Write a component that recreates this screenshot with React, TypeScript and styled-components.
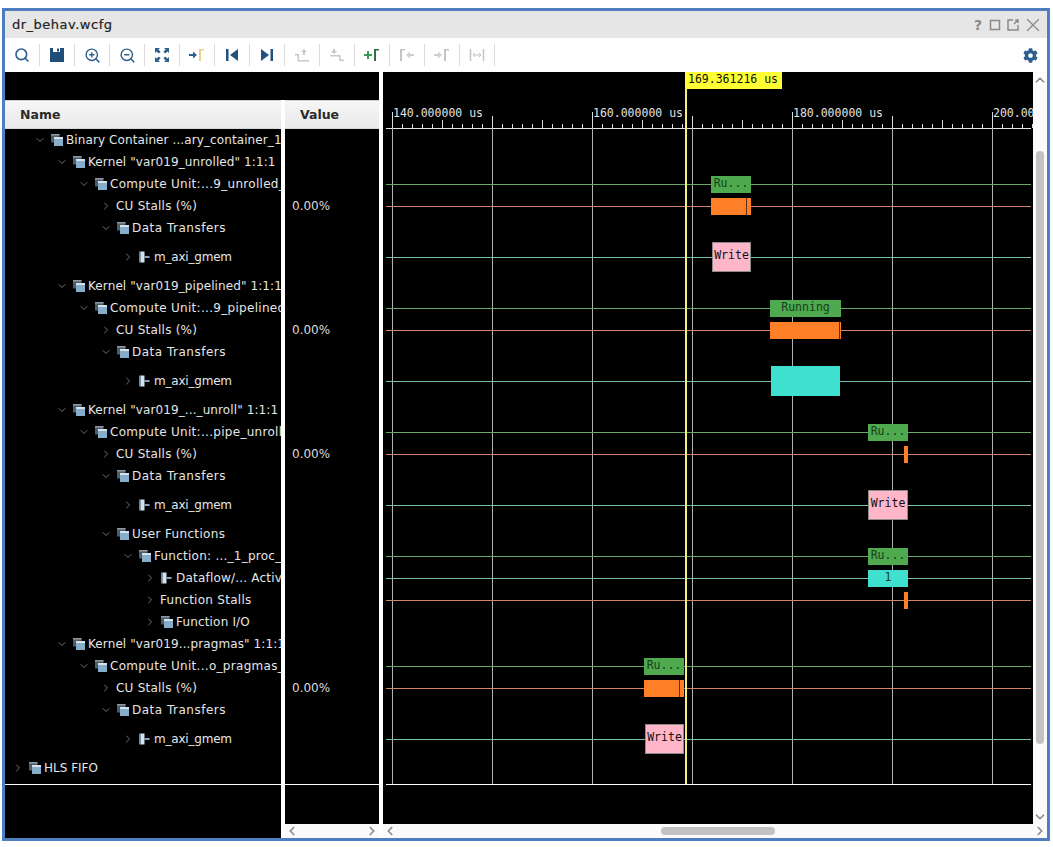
import React from 'react'
import styled, { createGlobalStyle } from 'styled-components'
import {
  ChevronDown,
  ChevronLeft,
  ChevronRight,
  ChevronUp,
  Search,
  X,
  ZoomIn,
  ZoomOut,
} from 'lucide-react'
import { FaCog } from 'react-icons/fa'

const GlobalStyle = createGlobalStyle`
  html, body {
    margin: 0;
    padding: 0;
    background: #fff;
  }
`

const Window = styled.div`
  box-sizing: border-box;
  width: 1048px;
  height: 833px;
  margin: 8px 0 0 2px;
  border: 3px solid #4f7dbd;
  display: flex;
  flex-direction: column;
  background: #fff;
  font-family: 'DejaVu Sans', sans-serif;
  overflow: hidden;
`

const TitleBar = styled.div`
  height: 27px;
  flex: none;
  background: #e6e6e6;
  display: flex;
  align-items: center;
  padding: 0 3px 0 7px;
`

const Title = styled.div`
  font-size: 13px;
  letter-spacing: 0.5px;
  color: #222;
  -webkit-text-stroke: 0.2px #222;
`

const WindowActions = styled.div`
  margin-left: auto;
  display: flex;
  align-items: center;
  gap: 4px;
  color: #8a8a8a;
`

const HelpMark = styled.span`
  font-size: 14px;
  font-weight: bold;
  width: 12px;
  text-align: center;
`

const CloseMark = styled.span`
  display: flex;
  margin-left: -2px;
`

const Toolbar = styled.div`
  height: 34px;
  flex: none;
  display: flex;
  align-items: center;
  background: #fff;
  padding-right: 9px;
`

const ToolButton = styled.div`
  box-sizing: border-box;
  width: 35px;
  height: 22px;
  border-right: 1px solid #dcdcdc;
  display: flex;
  align-items: center;
  justify-content: center;
`

const GearButton = styled.div`
  margin-left: auto;
  display: flex;
  color: #2f5f8c;
`

const Main = styled.div`
  flex: 1;
  min-height: 0;
  display: flex;
  background: #fff;
`

const TablePanel = styled.div`
  width: 374px;
  flex: none;
  display: flex;
  flex-direction: column;
  margin-right: 4px;
`

const TopBand = styled.div`
  height: 28px;
  flex: none;
  background: #000;
`

const Columns = styled.div`
  flex: 1;
  min-height: 0;
  display: flex;
  gap: 4px;
`

const NameColumn = styled.div`
  width: 276px;
  flex: none;
  display: flex;
  flex-direction: column;
  background: #000;
  overflow: hidden;
`

const ValueColumn = styled.div`
  flex: 1;
  display: flex;
  flex-direction: column;
  background: #000;
`

const HeaderCell = styled.div<{ $indent: number }>`
  box-sizing: border-box;
  height: 29px;
  flex: none;
  display: flex;
  align-items: center;
  padding-left: ${p => p.$indent}px;
  background: linear-gradient(#f6f6f6, #e9e9e9);
  border-top: 1px solid #cfcfcf;
  border-bottom: 1px solid #d8d8d8;
  font-size: 12.5px;
  font-weight: bold;
  color: #2a2a2a;
`

const RowList = styled.div`
  display: flex;
  flex-direction: column;
  height: 655px;
  flex: none;
  border-bottom: 1px solid #fff;
`

const TreeRow = styled.div<{ $tall: boolean; $level: number }>`
  height: ${p => (p.$tall ? 36 : 22)}px;
  flex: none;
  display: flex;
  align-items: center;
  padding-left: ${p => 7 + p.$level * 22}px;
  white-space: nowrap;
  font-size: 12px;
  color: #e6e6e6;
`

const Chevron = styled.span`
  width: 12px;
  flex: none;
  display: flex;
  justify-content: center;
  color: #8c8c8c;
`

const IconSlot = styled.span`
  margin-left: 5px;
  margin-right: 3px;
  display: flex;
  flex: none;
`

const Label = styled.span<{ $track: number; $plain: boolean }>`
  letter-spacing: ${p => p.$track}px;
  margin-left: ${p => (p.$plain ? 4 : 0)}px;
`

const ValueRow = styled.div<{ $tall: boolean }>`
  height: ${p => (p.$tall ? 36 : 22)}px;
  flex: none;
  display: flex;
  align-items: center;
  padding-left: 7px;
  font-size: 12px;
  color: #dcdcdc;
`

const ColumnFill = styled.div`
  flex: 1;
  background: #000;
`

const ScrollBarH = styled.div`
  height: 14px;
  flex: none;
  display: flex;
  align-items: center;
  background: #fafafa;
  color: #8c8c8c;
`

const ScrollEnd = styled.span`
  margin-left: auto;
  display: flex;
`

const ScrollStart = styled.span`
  display: flex;
`

const ThumbH = styled.div`
  width: 114px;
  height: 8px;
  margin-left: 264px;
  border-radius: 4px;
  background: #c2c2c2;
`

const WavePanel = styled.div`
  flex: 1;
  min-width: 0;
  display: flex;
  flex-direction: column;
`

const WaveBody = styled.div`
  flex: 1;
  min-height: 0;
  display: flex;
`

const WaveCanvas = styled.div`
  position: relative;
  flex: 1;
  background: #000;
  overflow: hidden;
`

const CursorBand = styled.div`
  height: 28px;
`

const Ruler = styled.svg`
  display: block;
`

const GridLines = styled.svg`
  position: absolute;
  left: 0;
  top: 0;
`

const CursorLine = styled.div`
  position: absolute;
  left: 302px;
  top: 16px;
  width: 2px;
  height: 696px;
  background: #f4ee7e;
  z-index: 2;
`

const CursorLabel = styled.div`
  position: absolute;
  left: 302px;
  top: 0;
  width: 97px;
  height: 17px;
  background: #ffff33;
  color: #111;
  font-family: 'DejaVu Sans Mono', monospace;
  font-size: 11.5px;
  line-height: 15px;
  padding-left: 3px;
  box-sizing: border-box;
  z-index: 3;
`

const WaveRows = styled.div`
  position: relative;
  display: flex;
  flex-direction: column;
`

const WaveRow = styled.div<{ $tall: boolean }>`
  position: relative;
  height: ${p => (p.$tall ? 36 : 22)}px;
  flex: none;
`

const lineColors = {
  green: '#6aa86a',
  orange: '#cf8466',
  teal: '#78c0ae',
}

const SignalLine = styled.div<{ $tone: keyof typeof lineColors }>`
  position: absolute;
  left: 3px;
  right: 2px;
  top: 50%;
  height: 1px;
  background: ${p => lineColors[p.$tone]};
`

const barColors = {
  run: '#4fa94f',
  stall: '#ff7f27',
  write: '#ffb6c8',
  busy: '#40e0d0',
}

const Bar = styled.div<{ $kind: keyof typeof barColors; $x: number; $w: number; $tall: boolean }>`
  position: absolute;
  left: ${p => p.$x}px;
  top: 3px;
  width: ${p => p.$w}px;
  height: ${p => (p.$tall ? 30 : 17)}px;
  box-sizing: border-box;
  background: ${p => barColors[p.$kind]};
  border: ${p => (p.$kind === 'write' ? '1px solid #8a8a8a' : 'none')};
  display: flex;
  align-items: center;
  justify-content: center;
  font-family: 'DejaVu Sans Mono', monospace;
  font-size: 11.5px;
  line-height: 13px;
  padding-bottom: 3px;
  color: ${p => (p.$kind === 'write' ? '#111' : '#14401a')};
  overflow: hidden;
  white-space: nowrap;
`

const BarNotch = styled.span<{ $right: number }>`
  position: absolute;
  right: ${p => p.$right}px;
  top: 0;
  bottom: 0;
  width: 1px;
  background: #5c3018;
`

const ScrollBarV = styled.div`
  width: 14px;
  flex: none;
  display: flex;
  flex-direction: column;
  align-items: center;
  background: #fafafa;
  color: #8c8c8c;
  padding-top: 1px;
  box-sizing: border-box;
`

const ThumbV = styled.div`
  width: 8px;
  height: 593px;
  margin-top: 64px;
  border-radius: 4px;
  background: #c2c2c2;
`

const ScrollDown = styled.span`
  margin-top: auto;
  display: flex;
`

const GroupIcon = () => (
  <svg width="12" height="12" viewBox="0 0 12 12">
    <rect x="0" y="0" width="8.5" height="8.5" fill="#4d5d68" />
    <rect x="0" y="0" width="8.5" height="1.5" fill="#8d99a3" />
    <rect x="3" y="3" width="9" height="9" fill="#86adc9" />
    <rect x="3" y="3" width="9" height="2" fill="#d5e2ea" />
  </svg>
)

const SignalIcon = () => (
  <svg width="12" height="12" viewBox="0 0 12 12">
    <rect x="0" y="0.500" width="1.500" height="11" fill="#6f8496" />
    <rect x="1.500" y="0.500" width="4" height="11" fill="#cfe4f5" />
    <rect x="5.500" y="5" width="5" height="2" fill="#8fa3b3" />
  </svg>
)

const SaveIcon = () => (
  <svg width="16" height="16" viewBox="0 0 16 16">
    <path d="M1 1h14v14H1z" fill="#1f4e79" />
    <rect x="4" y="1" width="7" height="4" fill="#fff" />
    <rect x="8" y="1.500" width="2" height="3" fill="#1f4e79" />
    <rect x="3" y="10" width="10" height="5" fill="#1f4e79" />
  </svg>
)

const FitIcon = () => (
  <svg width="16" height="16" viewBox="0 0 16 16" fill="#2f5f8c">
    <path d="M1 1h5L4.400 2.600 6.600 4.800 4.800 6.600 2.600 4.400 1 6z" />
    <path d="M15 1v5l-1.600-1.600-2.200 2.200-1.800-1.800 2.200-2.200L10 1z" />
    <path d="M1 15v-5l1.600 1.600 2.200-2.200 1.800 1.800-2.200 2.200L6 15z" />
    <path d="M15 15h-5l1.600-1.600-2.200-2.200 1.800-1.800 2.200 2.200L15 10z" />
  </svg>
)

const ArrowMark = ({ bracket, arrow }: { bracket: string; arrow: string }) => (
  <svg width="16" height="16" viewBox="0 0 16 16">
    <path d="M0 7h4V4.500L8 8l-4 3.500V9H0z" fill={arrow} />
    <path d="M10 14V2h5v1.500h-3V14z" fill={bracket} />
  </svg>
)

const PlusMark = () => (
  <svg width="16" height="16" viewBox="0 0 16 16">
    <path d="M0 7h3V4h2v3h3v2H5v3H3V9H0z" fill="#3f9a5a" />
    <path d="M10 14V2h5v1.500h-3V14z" fill="#2f6f4a" />
  </svg>
)

const EdgePrev = () => (
  <svg width="16" height="16" viewBox="0 0 16 16" fill="#22527f">
    <rect x="2" y="2" width="2.500" height="12" />
    <path d="M14 2v12L6 8z" />
  </svg>
)

const EdgeNext = () => (
  <svg width="16" height="16" viewBox="0 0 16 16" fill="#22527f">
    <rect x="11.500" y="2" width="2.500" height="12" />
    <path d="M2 2v12l8-6z" />
  </svg>
)

const SwapUp = () => (
  <svg width="16" height="16" viewBox="0 0 16 16" fill="#c8c8c8">
    <path d="M1 7h4v6h10v1.500H3.500V8.500H1z" />
    <path d="M10 2l3 3h-2v3H9V5H7z" />
  </svg>
)

const SwapDown = () => (
  <svg width="16" height="16" viewBox="0 0 16 16" fill="#c8c8c8">
    <path d="M1 9.500h9V14h5v-1.500h-3.500V8H1z" />
    <path d="M5 7L2 4h2V2h2v2h2z" />
  </svg>
)

const BracketLeft = () => (
  <svg width="16" height="16" viewBox="0 0 16 16">
    <path d="M1 14V2h5v1.500H3V14z" fill="#c4c4c4" />
    <path d="M15 7h-4V4.500L7 8l4 3.500V9h4z" fill="#cfcfcf" />
  </svg>
)

const SpanIcon = () => (
  <svg width="16" height="16" viewBox="0 0 16 16" fill="none" stroke="#c4c4c4">
    <path d="M1.500 2v12M14.500 2v12" strokeWidth="1.500" />
    <path d="M4 8h8M4 8l2-2M4 8l2 2M12 8l-2-2M12 8l-2 2" />
  </svg>
)

const FloatIcon = () => (
  <svg width="14" height="14" viewBox="0 0 14 14" fill="none" stroke="#8a8a8a" strokeWidth="1.500">
    <path d="M7 2H2v10h10V7" />
    <path d="M8 6l4-4M9 2h3v3" />
  </svg>
)

const BoxIcon = () => (
  <svg width="14" height="14" viewBox="0 0 14 14" fill="none" stroke="#8a8a8a" strokeWidth="1.500">
    <rect x="2.500" y="2.500" width="9" height="9" />
  </svg>
)

type Row = {
  level: number
  label: string
  track?: number
  icon?: 'group' | 'signal'
  open?: boolean
  tall?: boolean
  value?: string
  line?: keyof typeof lineColors
  bars?: { kind: keyof typeof barColors; x: number; w: number; text?: string; notch?: number }[]
}

// x of a bar is measured from the left edge of the wave canvas
const rows: Row[] = [
  { level: 1, label: 'Binary Container ...ary_container_1', track: 0.1, icon: 'group', open: true },
  { level: 2, label: 'Kernel "var019_unrolled" 1:1:1', track: 0.1, icon: 'group', open: true },
  {
    level: 3, label: 'Compute Unit:...9_unrolled_1', track: 0.3, icon: 'group', open: true, line: 'green',
    bars: [{ kind: 'run', x: 328, w: 40, text: 'Ru...' }],
  },
  {
    level: 4, label: 'CU Stalls (%)', track: 0.23, value: '0.00%', line: 'orange',
    bars: [{ kind: 'stall', x: 328, w: 40, notch: 4 }],
  },
  { level: 4, label: 'Data Transfers', track: 0.5, icon: 'group', open: true },
  {
    level: 5, label: 'm_axi_gmem', track: -0.2, icon: 'signal', tall: true, line: 'teal',
    bars: [{ kind: 'write', x: 329, w: 39, text: 'Write' }],
  },
  { level: 2, label: 'Kernel "var019_pipelined" 1:1:1', track: 0.1, icon: 'group', open: true },
  {
    level: 3, label: 'Compute Unit:...9_pipelined_1', track: 0.3, icon: 'group', open: true, line: 'green',
    bars: [{ kind: 'run', x: 387, w: 71, text: 'Running' }],
  },
  {
    level: 4, label: 'CU Stalls (%)', track: 0.23, value: '0.00%', line: 'orange',
    bars: [{ kind: 'stall', x: 387, w: 71, notch: 1 }],
  },
  { level: 4, label: 'Data Transfers', track: 0.5, icon: 'group', open: true },
  {
    level: 5, label: 'm_axi_gmem', track: -0.2, icon: 'signal', tall: true, line: 'teal',
    bars: [{ kind: 'busy', x: 388, w: 69 }],
  },
  { level: 2, label: 'Kernel "var019_..._unroll" 1:1:1', track: 0.1, icon: 'group', open: true },
  {
    level: 3, label: 'Compute Unit:...pipe_unroll_1', track: 0.3, icon: 'group', open: true, line: 'green',
    bars: [{ kind: 'run', x: 485, w: 40, text: 'Ru...' }],
  },
  {
    level: 4, label: 'CU Stalls (%)', track: 0.23, value: '0.00%', line: 'orange',
    bars: [{ kind: 'stall', x: 521, w: 4 }],
  },
  { level: 4, label: 'Data Transfers', track: 0.5, icon: 'group', open: true },
  {
    level: 5, label: 'm_axi_gmem', track: -0.2, icon: 'signal', tall: true, line: 'teal',
    bars: [{ kind: 'write', x: 485, w: 40, text: 'Write' }],
  },
  { level: 4, label: 'User Functions', track: 0.35, icon: 'group', open: true },
  {
    level: 5, label: 'Function: ..._1_proc_1', track: 0.25, icon: 'group', open: true, line: 'green',
    bars: [{ kind: 'run', x: 485, w: 40, text: 'Ru...' }],
  },
  {
    level: 6, label: 'Dataflow/... Activity', track: 0.2, icon: 'signal', line: 'teal',
    bars: [{ kind: 'busy', x: 485, w: 40, text: '1' }],
  },
  {
    level: 6, label: 'Function Stalls', track: 0.27, line: 'orange',
    bars: [{ kind: 'stall', x: 521, w: 4 }],
  },
  { level: 6, label: 'Function I/O', track: 0.17, icon: 'group' },
  { level: 2, label: 'Kernel "var019...pragmas" 1:1:1', track: 0.1, icon: 'group', open: true },
  {
    level: 3, label: 'Compute Unit...o_pragmas_1', track: 0.3, icon: 'group', open: true, line: 'green',
    bars: [{ kind: 'run', x: 261, w: 40, text: 'Ru...' }],
  },
  {
    level: 4, label: 'CU Stalls (%)', track: 0.23, value: '0.00%', line: 'orange',
    bars: [{ kind: 'stall', x: 261, w: 40, notch: 4 }],
  },
  { level: 4, label: 'Data Transfers', track: 0.5, icon: 'group', open: true },
  {
    level: 5, label: 'm_axi_gmem', track: -0.2, icon: 'signal', tall: true, line: 'teal',
    bars: [{ kind: 'write', x: 262, w: 39, text: 'Write' }],
  },
  { level: 0, label: 'HLS FIFO', icon: 'group' },
]

const tickXs = Array.from({ length: 65 }, (_, i) => 9 + i * 10)
const gridXs = [9, 109, 209, 309, 409, 509, 609]
const labels = [
  { x: 10, text: '140.000000 us' },
  { x: 210, text: '160.000000 us' },
  { x: 410, text: '180.000000 us' },
  { x: 610, text: '200.000000 us' },
]

const tickTop = (x: number) => {
  const i = (x - 9) / 10
  if (i % 20 === 0) return 12
  if (i % 10 === 0) return 16
  if (i % 5 === 0) return 20
  return 24
}

const App = () => {
  return (
    <Window>
      <GlobalStyle />
      <TitleBar>
        <Title>dr_behav.wcfg</Title>
        <WindowActions>
          <HelpMark>?</HelpMark>
          <BoxIcon />
          <FloatIcon />
          <CloseMark><X size={22} strokeWidth={1.3} /></CloseMark>
        </WindowActions>
      </TitleBar>
      <Toolbar>
        <ToolButton><Search size={16} color="#2f5f8c" strokeWidth={2.4} /></ToolButton>
        <ToolButton><SaveIcon /></ToolButton>
        <ToolButton><ZoomIn size={17} color="#2f5f8c" strokeWidth={2} /></ToolButton>
        <ToolButton><ZoomOut size={17} color="#2f5f8c" strokeWidth={2} /></ToolButton>
        <ToolButton><FitIcon /></ToolButton>
        <ToolButton><ArrowMark arrow="#2f5f8c" bracket="#e6d48c" /></ToolButton>
        <ToolButton><EdgePrev /></ToolButton>
        <ToolButton><EdgeNext /></ToolButton>
        <ToolButton><SwapUp /></ToolButton>
        <ToolButton><SwapDown /></ToolButton>
        <ToolButton><PlusMark /></ToolButton>
        <ToolButton><BracketLeft /></ToolButton>
        <ToolButton><ArrowMark arrow="#cfcfcf" bracket="#c4c4c4" /></ToolButton>
        <ToolButton><SpanIcon /></ToolButton>
        <GearButton><FaCog size={15} /></GearButton>
      </Toolbar>
      <Main>
        <TablePanel>
          <TopBand />
          <Columns>
            <NameColumn>
              <HeaderCell $indent={15}>Name</HeaderCell>
              <RowList>
                {rows.map((row, index) => (
                  <TreeRow key={`${row.label}-${index}`} $tall={!!row.tall} $level={row.level}>
                    <Chevron>
                      {row.open ? (
                        <ChevronDown size={14} strokeWidth={1.6} />
                      ) : (
                        <ChevronRight size={14} strokeWidth={1.6} />
                      )}
                    </Chevron>
                    {row.icon && (
                      <IconSlot>{row.icon === 'group' ? <GroupIcon /> : <SignalIcon />}</IconSlot>
                    )}
                    <Label $track={row.track ?? 0} $plain={!row.icon}>{row.label}</Label>
                  </TreeRow>
                ))}
              </RowList>
            </NameColumn>
            <ValueColumn>
              <HeaderCell $indent={15}>Value</HeaderCell>
              <RowList>
                {rows.map((row, index) => (
                  <ValueRow key={`${row.label}-${index}`} $tall={!!row.tall}>
                    {row.value}
                  </ValueRow>
                ))}
              </RowList>
              <ColumnFill />
              <ScrollBarH>
                <ScrollStart><ChevronLeft size={14} strokeWidth={3} /></ScrollStart>
                <ScrollEnd><ChevronRight size={14} strokeWidth={3} /></ScrollEnd>
              </ScrollBarH>
            </ValueColumn>
          </Columns>
        </TablePanel>
        <WavePanel>
          <WaveBody>
            <WaveCanvas>
              <GridLines width="650" height="713">
                {gridXs.map(x => (
                  <line key={x} x1={x + 0.5} x2={x + 0.5} y1="56" y2="712" stroke="#aeb4ae" />
                ))}
                <line x1="3" x2="648" y1="712.5" y2="712.5" stroke="#fff" />
              </GridLines>
              <CursorLabel>169.361216 us</CursorLabel>
              <CursorLine />
              <CursorBand />
              <Ruler width="650" height="29">
                {labels.map(l => (
                  <text
                    key={l.x}
                    x={l.x}
                    y="17"
                    fill="#e2e2e2"
                    fontFamily="'DejaVu Sans Mono', monospace"
                    fontSize="11.5"
                  >
                    {l.text}
                  </text>
                ))}
                {tickXs.map(x => (
                  <line key={x} x1={x + 0.5} x2={x + 0.5} y1={tickTop(x)} y2="28" stroke="#d8d8d8" />
                ))}
                <line x1="3" x2="648" y1="28.5" y2="28.5" stroke="#e6e6e6" />
              </Ruler>
              <WaveRows>
                {rows.map((row, index) => (
                  <WaveRow key={`${row.label}-${index}`} $tall={!!row.tall}>
                    {row.line && <SignalLine $tone={row.line} />}
                    {row.bars?.map(bar => (
                      <Bar key={bar.x} $kind={bar.kind} $x={bar.x} $w={bar.w} $tall={!!row.tall}>
                        {bar.text}
                        {bar.notch !== undefined && <BarNotch $right={bar.notch} />}
                      </Bar>
                    ))}
                  </WaveRow>
                ))}
              </WaveRows>
            </WaveCanvas>
            <ScrollBarV>
              <ChevronUp size={14} strokeWidth={3} />
              <ThumbV />
              <ScrollDown><ChevronDown size={14} strokeWidth={3} /></ScrollDown>
            </ScrollBarV>
          </WaveBody>
          <ScrollBarH>
            <ScrollStart><ChevronLeft size={14} strokeWidth={3} /></ScrollStart>
            <ThumbH />
            <ScrollEnd><ChevronRight size={14} strokeWidth={3} /></ScrollEnd>
          </ScrollBarH>
        </WavePanel>
      </Main>
    </Window>
  )
}

export default App
